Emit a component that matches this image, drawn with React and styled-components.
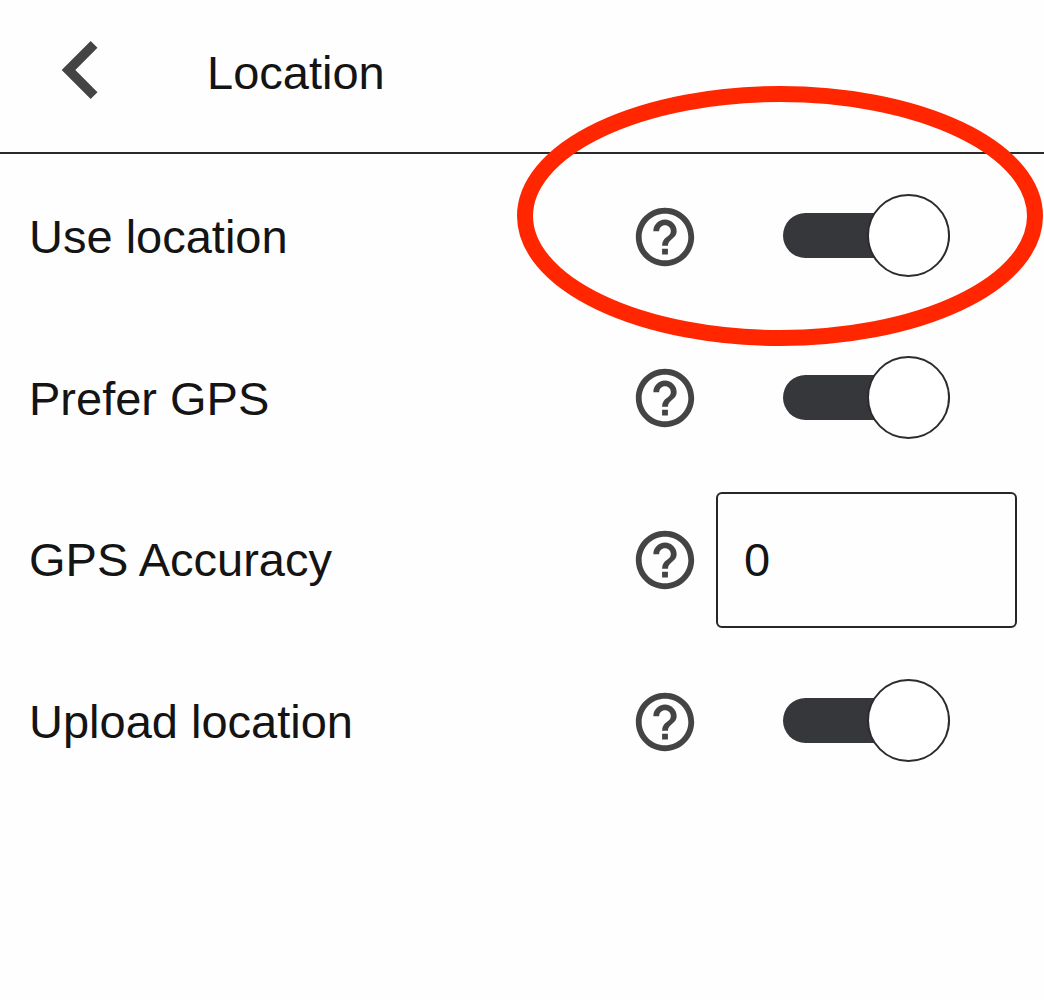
import styled, { createGlobalStyle } from 'styled-components'

const GlobalStyle = createGlobalStyle`
    html, body {
        margin: 0;
        padding: 0;
        background: #fefefe;
    }
    body {
        font-family: "Liberation Sans", Arial, sans-serif;
        color: #141414;
    }
`

const Screen = styled.div`
    position: relative;
    width: 1044px;
    height: 1000px;
    overflow: hidden;
    background: #fefefe;
`

const Header = styled.header`
    display: flex;
    align-items: center;
    height: 154px;
    padding: 0 0 8px 23px;
    box-sizing: border-box;
    border-bottom: 2px solid #2a2a2a;
`

const BackIcon = styled.svg`
    display: block;
    width: 116px;
    height: 116px;
    margin-bottom: 5px;
    fill: #444444;
`

const Title = styled.h1`
    margin: 0 0 0 68px;
    font-size: 47px;
    font-weight: 400;
    line-height: 1;
`

const Row = styled.div`
    display: grid;
    grid-template-columns: 1fr 70px 300px;
    column-gap: 17px;
    align-items: center;
    height: 161.6px;
    padding: 0 27px 0 29px;
    box-sizing: border-box;
    &:first-of-type {
        margin-top: 2px;
    }
`

const Label = styled.span`
    font-size: 47px;
    line-height: 1;
`

const HelpIcon = styled.svg`
    display: block;
    width: 70px;
    height: 70px;
    fill: #444444;
`

const ControlCell = styled.div`
    display: flex;
    justify-content: center;
    align-items: center;
`

const Track = styled.div`
    position: relative;
    width: 167px;
    height: 45px;
    margin: -2.5px 0 0 -1px;
    border-radius: 22.5px;
    background: #36373a;
`

const Knob = styled.div`
    position: absolute;
    right: 0;
    top: -19px;
    width: 83px;
    height: 83px;
    box-sizing: border-box;
    border: 2.5px solid #2c2c2e;
    border-radius: 50%;
    background: #ffffff;
`

const NumberInput = styled.input`
    width: 301px;
    height: 136px;
    margin-left: -1px;
    box-sizing: border-box;
    padding: 0 26px;
    border: 2.5px solid #262626;
    border-radius: 6px;
    outline: none;
    background: #fefefe;
    color: #141414;
    font-family: inherit;
    font-size: 47px;
`

const Annotation = styled.svg`
    position: absolute;
    left: 510px;
    top: 80px;
    width: 534px;
    height: 274px;
    pointer-events: none;
`

const helpPath = 'M11 18h2v-2h-2v2zm1-16C6.48 2 2 6.48 2 12s4.48 10 10 10 10-4.48 10-10S17.52 2 12 2zm0 18c-4.41 0-8-3.59-8-8s3.59-8 8-8 8 3.59 8 8-3.59 8-8 8zm0-14c-2.21 0-4 1.79-4 4h2c0-1.1.9-2 2-2s2 .9 2 2c0 2-3 1.75-3 5h2c0-2.25 3-2.5 3-5 0-2.21-1.79-4-4-4z'

const Toggle = () => (
    <Track>
        <Knob />
    </Track>
)

const settings = [
    { label: 'Use location', control: <Toggle /> },
    { label: 'Prefer GPS', control: <Toggle /> },
    { label: 'GPS Accuracy', control: <NumberInput type="text" defaultValue="0" /> },
    { label: 'Upload location', control: <Toggle /> },
]

const App = () => {
    return (
        <Screen>
            <GlobalStyle />
            <Header>
                <BackIcon viewBox="0 0 24 24">
                    <path d="M15.41 7.41L14 6l-6 6 6 6 1.41-1.41L10.83 12z" />
                </BackIcon>
                <Title>Location</Title>
            </Header>
            {settings.map((item) => (
                <Row key={item.label}>
                    <Label>{item.label}</Label>
                    <HelpIcon viewBox="0 0 24 24">
                        <path d={helpPath} />
                    </HelpIcon>
                    <ControlCell>{item.control}</ControlCell>
                </Row>
            ))}
            <Annotation viewBox="0 0 534 274">
                <ellipse cx="270" cy="136" rx="255" ry="122" fill="none" stroke="#ff2600" strokeWidth="16" />
            </Annotation>
        </Screen>
    )
}

export default App
